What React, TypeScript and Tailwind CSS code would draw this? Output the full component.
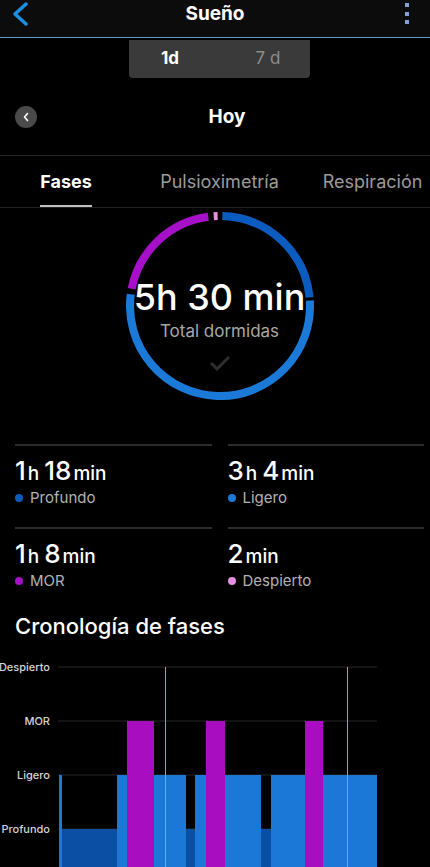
import React from "react";

const arc = (a0: number, a1: number, r = 90, c = 94) => {
  const p = (a: number) => {
    const t = (a * Math.PI) / 180;
    return `${(c + r * Math.sin(t)).toFixed(2)} ${(c - r * Math.cos(t)).toFixed(2)}`;
  };
  const large = a1 - a0 > 180 ? 1 : 0;
  return `M ${p(a0)} A ${r} ${r} 0 ${large} 1 ${p(a1)}`;
};

const stats = [
  { parts: [["1", "h"], ["18", "min"]], label: "Profundo", dot: "bg-[#0c5cbf]" },
  { parts: [["3", "h"], ["4", "min"]], label: "Ligero", dot: "bg-[#1b7ad8]" },
  { parts: [["1", "h"], ["8", "min"]], label: "MOR", dot: "bg-[#a510c8]" },
  { parts: [["2", "min"]], label: "Despierto", dot: "bg-[#e58fe0]" },
];

// x ranges in chart coords, top = level line
const LIGHT = "#1c78d6";
const DARK = "#0a4fa3";
const PURPLE = "#a90dc0";
const bars: [number, number, string, number][] = [
  [9, 12, LIGHT, 134],
  [12, 67, DARK, 188],
  [67, 77, LIGHT, 134],
  [77, 104, PURPLE, 80],
  [104, 136, LIGHT, 134],
  [136, 145, DARK, 188],
  [145, 156, LIGHT, 134],
  [156, 175, PURPLE, 80],
  [175, 211, LIGHT, 134],
  [211, 221, DARK, 188],
  [221, 255, LIGHT, 134],
  [255, 273, PURPLE, 80],
  [273, 327, LIGHT, 134],
];

export default function App() {
  return (
    <div className="h-[867px] w-[430px] overflow-hidden bg-black font-['Inter',sans-serif] text-white">
      {/* top bar */}
      <div className="flex h-[38px] items-start justify-between border-b border-[#5c9dcc] bg-[#0c0c0c]">
        <div className="flex h-[28px] w-[60px] items-center pl-[12px]">
          <svg width="18" height="24" viewBox="0 0 18 24">
            <polyline points="14,2 3,12 14,22" fill="none" stroke="#1e8fe0" strokeWidth="3.5" strokeLinecap="round" strokeLinejoin="round" />
          </svg>
        </div>
        <div className="text-[19px] font-bold leading-[28px]">Sueño</div>
        <div className="flex w-[60px] flex-col items-end gap-[4.5px] pr-[21px] pt-[3px]">
          <div className="h-[4px] w-[4px] bg-[#7ea2d8]" />
          <div className="h-[4px] w-[4px] bg-[#7ea2d8]" />
          <div className="h-[4px] w-[4px] bg-[#7ea2d8]" />
        </div>
      </div>

      {/* 1d / 7d */}
      <div className="flex pl-[129px] pt-[2px]">
        <div className="flex h-[38px] w-[181px] items-center rounded-b-[4px] bg-[#3a3a3a] text-[17px]">
          <div className="w-[82px] text-center font-bold">1d</div>
          <div className="ml-[16px] w-[82px] text-center text-[#8d8d8d]">7 d</div>
        </div>
      </div>

      {/* day row */}
      <div className="flex h-[78px] items-center border-b border-[#242424] pl-[15px]">
        <div className="flex h-[22px] w-[22px] items-center justify-center rounded-full bg-[#4a4a4a]">
          <svg width="8" height="10" viewBox="0 0 8 10">
            <polyline points="5.5,1.5 2.5,5 5.5,8.5" fill="none" stroke="#fff" strokeWidth="1.6" strokeLinecap="round" strokeLinejoin="round" />
          </svg>
        </div>
        <div className="flex-1 pr-[13px] pt-[2px] text-center text-[19px] font-bold">Hoy</div>
      </div>

      {/* tabs */}
      <div className="flex h-[52px] overflow-hidden border-b border-[#222] text-[18px]">
        <div className="flex w-[132px] shrink-0 justify-center pt-[14px]">
          <span className="border-b-2 border-[#bdbdbd] pb-[11px] font-bold leading-[24px]">Fases</span>
        </div>
        <div className="flex w-[175px] shrink-0 justify-center pt-[14px]">
          <span className="leading-[24px] text-[#9b9b9b]">Pulsioximetría</span>
        </div>
        <div className="flex w-[131px] shrink-0 justify-center pt-[14px]">
          <span className="whitespace-nowrap leading-[24px] text-[#9b9b9b]">Respiración</span>
        </div>
      </div>

      {/* ring */}
      <div className="mt-[4px] flex justify-center pl-[9px]">
        <div className="grid h-[188px] w-[188px]">
          <svg className="[grid-area:1/1]" width="188" height="188" viewBox="0 0 188 188">
            <path d={arc(1.5, 84.5)} fill="none" stroke="#0c5cbf" strokeWidth="8" />
            <path d={arc(86.5, 277.5)} fill="none" stroke="#1b7ad8" strokeWidth="8" />
            <path d={arc(281, 352.5)} fill="none" stroke="#a510c8" strokeWidth="8" />
            <path d={arc(356, 358.5)} fill="none" stroke="#e58fe0" strokeWidth="8" />
          </svg>
          <div className="flex flex-col items-center pt-[65px] [grid-area:1/1]">
            <div className="whitespace-nowrap text-[36px] font-medium leading-[40px]">5h 30 min</div>
            <div className="mt-[3px] text-[17px] leading-[22px] text-[#a8a8a8]">Total dormidas</div>
            <svg className="mt-[12px]" width="22" height="18" viewBox="0 0 22 18">
              <polyline points="2,9 8,15 20,3" fill="none" stroke="#2e2e2e" strokeWidth="3" />
            </svg>
          </div>
        </div>
      </div>

      {/* stats */}
      <div className="mt-[44px] grid grid-cols-2 gap-x-[16px] pl-[15px] pr-[6px]">
        {stats.map((s) => (
          <div key={s.label} className="h-[83px] border-t-2 border-[#2b2b2b]">
            <div className="mt-[11px] flex items-baseline gap-[5px] leading-[28px]">
              {s.parts.map(([n, u]) => (
                <span key={u} className="flex items-baseline">
                  <span className="text-[26px] font-medium">{n}</span>
                  <span className="ml-[2px] text-[19px] font-medium">{u}</span>
                </span>
              ))}
            </div>
            <div className="flex items-center gap-[7px] text-[15px] leading-[20px] text-[#b3b3b3]">
              <span className={`h-[8px] w-[8px] rounded-full ${s.dot}`} />
              {s.label}
            </div>
          </div>
        ))}
      </div>

      {/* timeline */}
      <div className="pl-[15px] pt-[2px] text-[22px] font-medium leading-[28px]">Cronología de fases</div>
      <div className="flex">
        <div className="flex w-[50px] shrink-0 flex-col text-[11px] font-medium text-[#d4d4d4]">
          {["Despierto", "MOR", "Ligero", "Profundo"].map((l) => (
            <div key={l} className="flex h-[54px] items-center justify-end whitespace-nowrap">
              {l}
            </div>
          ))}
        </div>
        <svg width="380" height="227" viewBox="0 0 380 227" className="shrink-0">
          {[27, 81, 135, 189].map((y) => (
            <line key={y} x1="8" x2="327" y1={y} y2={y} stroke="#262626" strokeWidth="1" />
          ))}
          {bars.map(([x0, x1, c, top], i) => (
            <rect key={i} x={x0} y={top + 1} width={x1 - x0} height={227 - top} fill={c} />
          ))}
          <line x1="115.5" x2="115.5" y1="27" y2="227" stroke="#b98bb3" strokeWidth="1" />
          <line x1="297.5" x2="297.5" y1="27" y2="227" stroke="#b98bb3" strokeWidth="1" />
        </svg>
      </div>
    </div>
  );
}
